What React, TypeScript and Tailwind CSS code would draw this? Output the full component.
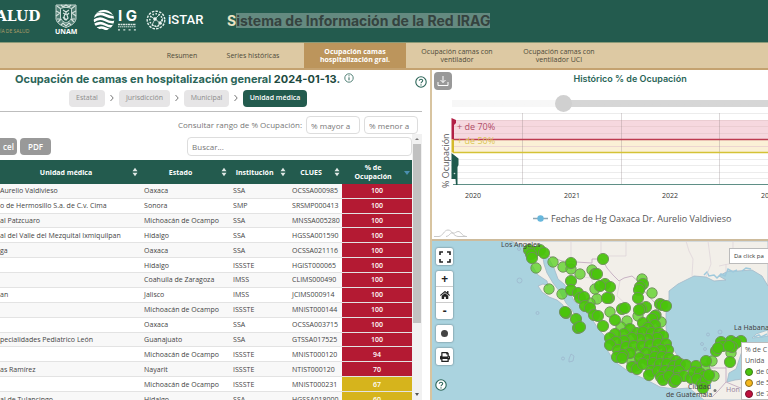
import { FaHome, FaPrint } from "react-icons/fa";

type Row = [string, string, string, string, number];

const rows: Row[] = [
  ["Aurelio Valdivieso", "Oaxaca", "SSA", "OCSSA000985", 100],
  ["o de Hermosillo S.a. de C.v. Cima", "Sonora", "SMP", "SRSMP000413", 100],
  ["al Patzcuaro", "Michoacán de Ocampo", "SSA", "MNSSA005280", 100],
  ["al del Valle del Mezquital Ixmiquilpan", "Hidalgo", "SSA", "HGSSA001590", 100],
  ["ga", "Oaxaca", "SSA", "OCSSA021116", 100],
  ["", "Hidalgo", "ISSSTE", "HGIST000065", 100],
  ["", "Coahuila de Zaragoza", "IMSS", "CLIMS000490", 100],
  ["an", "Jalisco", "IMSS", "JCIMS000914", 100],
  ["", "Michoacán de Ocampo", "ISSSTE", "MNIST000144", 100],
  ["", "Oaxaca", "SSA", "OCSSA003715", 100],
  ["pecialidades Pediatrico León", "Guanajuato", "SSA", "GTSSA017525", 100],
  ["", "Michoacán de Ocampo", "ISSSTE", "MNIST000120", 94],
  ["as Ramírez", "Nayarit", "ISSSTE", "NTIST000120", 70],
  ["", "Michoacán de Ocampo", "ISSSTE", "MNIST000231", 67],
  ["al de Tulancingo", "Hidalgo", "SSA", "HGSSA018000", 60],
];

const lightDots = [
  [553, 262], [563, 267], [571, 269], [580, 274], [592, 270], [595, 289],
  [549, 289], [562, 294], [597, 299], [536, 268], [642, 279], [652, 293],
  [610, 312], [627, 321], [638, 316], [656, 315], [661, 322], [621, 327],
  [731, 353], [712, 361], [714, 376], [705, 369], [638, 352], [632, 362],
  [590, 303], [636, 366], [672, 378],
];

const dots = [
  [529, 250], [534, 252], [540, 250], [544, 253], [531, 254], [532, 258],
  [571, 263], [595, 274], [571, 281], [571, 290], [578, 293], [580, 298],
  [584, 297], [585, 306], [590, 308], [594, 315], [566, 313], [565, 312],
  [576, 319], [578, 328], [580, 327], [603, 259], [597, 274], [605, 284],
  [610, 287], [600, 286], [609, 298], [607, 298], [598, 316], [622, 309],
  [625, 308], [643, 284], [640, 287], [639, 290], [638, 298], [646, 307],
  [641, 309], [639, 310], [660, 304], [662, 305], [666, 306], [615, 320],
  [603, 326], [655, 316], [652, 319], [643, 323], [655, 325], [648, 328],
  [630, 329], [637, 333], [624, 334], [615, 334], [610, 338], [643, 332],
  [652, 333], [659, 333], [663, 336], [657, 338], [648, 339], [640, 339],
  [632, 338], [624, 341], [616, 342], [610, 345], [618, 350], [626, 347],
  [634, 346], [642, 346], [650, 345], [658, 344], [666, 344], [668, 350],
  [661, 350], [654, 352], [646, 353], [630, 353], [623, 355], [617, 357],
  [622, 358], [640, 358], [648, 360], [655, 357], [662, 357], [669, 358],
  [676, 361], [632, 367], [637, 369], [643, 364], [653, 363], [660, 364],
  [667, 364], [674, 366], [680, 364], [686, 365], [651, 371], [649, 375],
  [658, 371], [665, 371], [672, 371], [679, 371], [661, 377], [663, 380],
  [669, 376], [677, 378], [684, 376], [674, 382], [676, 380], [691, 378],
  [696, 366], [694, 372], [700, 373], [706, 361], [704, 376], [697, 379],
  [702, 384], [706, 380], [703, 388], [709, 375], [716, 351], [721, 342],
  [723, 346], [731, 341], [741, 341], [736, 343], [718, 348], [730, 362],
  [732, 347], [729, 346],
];

const tabs = [
  "Ocupación camas hospitalización gral.",
  "Ocupación camas con ventilador",
  "Ocupación camas con ventilador UCI",
];

function Sort({ active = false }: { active?: boolean }) {
  return (
    <svg viewBox="0 0 6 10" className="h-[10px] w-[6px] shrink-0">
      {active ? (
        <path d="M0 4h6L3 8z" fill="#4b8fb0" />
      ) : (
        <path d="M0.5 4.3h5L3 0.8zM0.5 5.7h5L3 9.2z" fill="#dfe9e6" />
      )}
    </svg>
  );
}

function Help() {
  return (
    <svg viewBox="0 0 12 12" className="size-3">
      <circle cx="6" cy="6" r="5.2" fill="#fff" stroke="#2b6558" strokeWidth="1.1" />
      <path d="M4.3 4.8C4.3 2.6 7.8 2.8 7.7 4.7C7.6 5.8 6 5.9 6 7.3" fill="none" stroke="#2b6558" strokeWidth="1.1" />
      <circle cx="6" cy="8.9" r="0.7" fill="#2b6558" />
    </svg>
  );
}

function Logos() {
  return (
    <div className="flex h-full w-[227px] shrink-0 items-start pt-1">
      <div className="w-[55px] pt-1">
        <p className="-ml-1 font-['DejaVu_Serif',serif] text-[14px] leading-4 font-bold">ALUD</p>
        <p className="pt-1 text-[5px] leading-[6px] text-[#b59f68]">ÍA DE SALUD</p>
      </div>
      <div className="flex w-[38px] flex-col">
        <svg viewBox="0 0 22 24" className="h-6 w-[22px]" fill="none" stroke="#d5e3de">
          <path d="M1 1H21V15C20 20 15 22 11 23.500C7 22 2 20 1 15Z" fill="#d5e3de" fillOpacity="0.25" strokeWidth="0.9" />
          <path d="M2 2l4 3M20 2l-4 3M1 7l4 2-4 3M21 7l-4 2 4 3M2 15l4 0-3 3M20 15l-4 0 3 3M6 21l2-2 3 3 3-3 2 2M6 1l2 2 3-2 3 2 2-2" strokeWidth="1.100" />
          <path d="M5.500 4.500C9 3 13 3 16.500 4.500V14C15.500 17 13 18 11 19C9 18 6.500 17 5.500 14Z" fill="#235b4e" strokeWidth="0.9" />
          <path d="M8 6l3 2 3-2M8 9l2 1-1 3 2 3 2-2-1-3 2-2M11 7v4M8 13l2 3" strokeWidth="1.2" />
        </svg>
        <p className="text-[7px] leading-[7px] font-bold">UNAM</p>
      </div>
      <svg viewBox="0 0 22 22" className="mt-[5px] h-[22px] w-[22px]" fill="none" stroke="#fff" strokeWidth="2.6">
        <clipPath id="globe"><circle cx="11" cy="11" r="10.300" /></clipPath>
        <g clipPath="url(#globe)">
          <path d="M0 3.500Q12 -1 22 6M0 8Q6 3 12 6T23 8.500M0 12.500Q6 7.500 12 11T23 12.500M0 17Q6 12 12 15.500T23 16M2 21Q7 17 12 19.500T20 20.500" />
        </g>
      </svg>
      <div className="ml-[3px] w-7 pt-1">
        <p className="font-['Inter',sans-serif] text-[15px] leading-[15px] font-bold">I G</p>
        <svg viewBox="0 0 18 8" className="h-2 w-[18px]" stroke="#d5e3de" fill="none">
          <path d="M0 1.500h18" strokeDasharray="2 0.5" strokeWidth="1.300" />
          <path d="M0 3.800h18" strokeDasharray="1.500 0.5" />
          <path d="M0 6.800h18" strokeDasharray="2 3.300" strokeWidth="1.300" />
        </svg>
      </div>
      <svg viewBox="0 0 20 20" className="mt-[6px] size-5" fill="none" stroke="#e3efeb">
        <circle cx="10" cy="10" r="8.800" strokeWidth="1.400" strokeDasharray="2.500 1.200" />
        <circle cx="10" cy="10" r="6.200" strokeWidth="1.600" strokeDasharray="1.500 1.600" />
        <path d="M4 6l5 3 5-5M9 9l-3 6M9 9l5 4 3-5M14 13l-3 4M6 15l5 2" strokeWidth="0.8" />
        <circle cx="9" cy="9" r="1.300" fill="#fff" />
        <circle cx="14" cy="13" r="1.200" fill="#fff" />
      </svg>
      <p className="ml-[2px] pt-2 font-['Roboto',sans-serif] text-[13px] leading-4 font-medium">iSTAR</p>
    </div>
  );
}

function Capacity() {
  return (
    <section className="min-w-0 overflow-hidden bg-white">
      <div className="flex h-[19px] items-center gap-1 pl-[15px]">
        <h2 className="font-['Inter',sans-serif] text-[11px] font-bold whitespace-nowrap text-[#2b6558]">
          Ocupación de camas en hospitalización general <span className="text-[#1d4a40]">2024-01-13.</span>
        </h2>
        <svg viewBox="0 0 10 10" className="mb-1 size-[10px]" fill="none" stroke="#2b6558">
          <circle cx="5" cy="5" r="4.200" strokeWidth="0.8" />
          <path d="M5 4.300v3M5 2.300v1" />
        </svg>
        <button className="mt-1 mr-[3px] ml-auto" aria-label="Ayuda"><Help /></button>
      </div>
      <div className="mr-2 flex h-[23px] items-center gap-1 border-b border-[#bdbdbd] pb-1 pl-[69px] text-[7px] text-[#8c8c8c]">
        <button className="h-[17px] w-9 rounded-sm bg-[#e6e5e6]">Estatal</button>
        <Chevron />
        <button className="h-[17px] w-[51px] rounded-sm bg-[#e6e5e6]">Jurisdicción</button>
        <Chevron />
        <button className="h-[17px] w-[45px] rounded-sm bg-[#e6e5e6]">Municipal</button>
        <Chevron />
        <button className="h-[17px] w-16 rounded-sm bg-[#235b4e] font-semibold text-white">Unidad médica</button>
      </div>
      <div className="mr-3 flex h-[22px] items-center justify-end gap-1 pt-1 text-[8px] text-[#777]">
        <label htmlFor="mayor">Consultar rango de % Ocupación:</label>
        <input id="mayor" placeholder="% mayor a" className="h-[18px] w-[54px] rounded-sm border border-[#ddd] px-1 placeholder:text-[#777]" />
        <input aria-label="% menor a" placeholder="% menor a" className="h-[18px] w-[54px] rounded-sm border border-[#ddd] px-1 placeholder:text-[#777]" />
      </div>
      <div className="flex">
        <div className="min-w-0 flex-1">
          <div className="flex h-[26px] items-center pb-px text-[8px]">
            <button className="mr-[3px] h-[17px] w-[17px] rounded-r-sm bg-[#999] font-semibold text-white">cel</button>
            <button className="h-[17px] w-[31px] rounded-sm bg-[#999] font-semibold text-white">PDF</button>
            <input aria-label="Buscar" placeholder="Buscar..." className="ml-auto h-[19px] w-[225px] rounded-sm border border-[#ddd] px-1 placeholder:text-[#777]" />
          </div>
          <table className="h-[247px] w-full table-fixed border-collapse text-[7px] leading-[9px] text-[#444]">
            <colgroup>
              <col />
              <col className="w-[89px]" />
              <col className="w-[59px]" />
              <col className="w-[54px]" />
              <col className="w-[70px]" />
            </colgroup>
            <thead className="bg-[#235b4e] text-white">
              <tr className="h-6">
                {["Unidad médica", "Estado", "Institución", "CLUES", "% de Ocupación"].map((h, i) => (
                  <th key={h} className="p-0 font-bold">
                    <div className="flex items-center pr-[2px]">
                      <span className={i === 4 ? "flex-1 px-2" : "flex-1"}>{h}</span>
                      <Sort active={i === 4} />
                    </div>
                  </th>
                ))}
              </tr>
            </thead>
            <tbody>
              {rows.map(([unit, state, inst, clues, pct]) => (
                <tr key={clues} className="border-b border-[#e3e3e3] odd:bg-[#f8f8f8]">
                  <td className="p-0 whitespace-nowrap">{unit}</td>
                  <td className="p-0 pl-1 whitespace-nowrap">{state}</td>
                  <td className="p-0 pl-1">{inst}</td>
                  <td className="p-0 pl-1 whitespace-nowrap">{clues}</td>
                  <td className={`p-0 text-center font-semibold text-white ${pct >= 70 ? "bg-[#b41a33]" : "bg-[#d6b41c]"}`}>{pct}</td>
                </tr>
              ))}
            </tbody>
          </table>
        </div>
        <div className="mr-2 flex w-[10px] flex-col items-center bg-[#f1f1f1]">
          <svg viewBox="0 0 10 10" className="size-[10px] shrink-0"><path d="M3 6h4L5 4z" fill="#777" /></svg>
          <div className="h-[179px] w-2 bg-[#c1c1c1]" />
          <svg viewBox="0 0 10 10" className="mt-[66px] size-[10px] shrink-0"><path d="M3 4h4L5 7z" fill="#555" /></svg>
        </div>
      </div>
    </section>
  );
}

function Chevron() {
  return (
    <svg viewBox="0 0 4 8" className="mx-px h-2 w-1" fill="none" stroke="#777">
      <path d="M0.500 1L3.200 4L0.500 7" />
    </svg>
  );
}

function History() {
  return (
    <section className="h-[171px] overflow-hidden border-b-2 border-[#cdbb9c] bg-white">
      <div className="flex w-[400px] items-start pt-[2px] pl-[2px]">
        <button className="flex size-[18px] items-center justify-center rounded-sm bg-[#999]" aria-label="Descargar">
          <svg viewBox="0 0 14 14" className="size-[14px]" fill="none" stroke="#fff">
            <path d="M7 2v6.500M4.500 6L7 8.500L9.500 6M2 8v3.500h10V8" />
          </svg>
        </button>
        <h2 className="flex-1 pr-6 text-center font-['Inter',sans-serif] text-[9px] leading-[14px] font-semibold text-[#2b6558]">
          Histórico % de Ocupación
        </h2>
      </div>
      <input
        type="range"
        defaultValue={27}
        aria-label="Periodo"
        className="mt-[5px] ml-5 block h-[17px] w-[400px] appearance-none bg-transparent [&::-webkit-slider-runnable-track]:h-[7px] [&::-webkit-slider-runnable-track]:bg-linear-to-r [&::-webkit-slider-runnable-track]:from-[#f7f7f7] [&::-webkit-slider-runnable-track]:from-28% [&::-webkit-slider-runnable-track]:to-[#d6d6d6] [&::-webkit-slider-runnable-track]:to-28% [&::-webkit-slider-thumb]:-mt-[5px] [&::-webkit-slider-thumb]:size-[17px] [&::-webkit-slider-thumb]:appearance-none [&::-webkit-slider-thumb]:rounded-full [&::-webkit-slider-thumb]:bg-[#d0d0d0]"
      />
      <svg viewBox="432 112 400 127" className="block h-[127px] w-[400px]" fontFamily="'Open Sans', sans-serif" fill="#555">
        <path d="M451 113.500H832M451 159.500H832M451 165.500H832M451 172.500H832M451 178.500H832" stroke="#ececec" />
        <rect x="453" y="120" width="379" height="19" fill="#f6d8df" />
        <rect x="453" y="140" width="379" height="12" fill="#fbf0d6" />
        <path d="M453 120.500H832M453 126.500H832M453 133.500H832M453 146.500H832" stroke="#e6c9cd" strokeWidth="0.7" />
        <path d="M522.500 113V185M621.500 113V185M719.500 113V185" stroke="#8a7f80" strokeOpacity="0.3" />
        <path d="M453 139.500H832" stroke="#bd3b50" strokeWidth="1.300" />
        <path d="M453 152.500H832" stroke="#d4c235" strokeWidth="1.300" />
        <path d="M453 184.500H832" stroke="#5f8f86" />
        <path d="M451.500 118L456 120V123L454 125V139.500H451.500z" fill="#b21f45" />
        <path d="M451.500 139.500H454V152.500H451.500z" fill="#d4b92b" />
        <path d="M451.500 153L458.500 158.500V165L457.500 167V185H456L455.500 179H451.500z" fill="#1f5a4d" />
        <circle cx="454.500" cy="173.500" r="0.8" fill="#cfe0dc" />
        <text x="457" y="130" fontSize="9" fill="#b04c66">+ de 70%</text>
        <text x="457" y="144" fontSize="9" fill="#dcc657">+ de 50%</text>
        <text transform="translate(449 188) rotate(-90)" fontSize="9">% Ocupación</text>
        <g fontSize="7" textAnchor="middle" fill="#333">
          <text x="473" y="198">2020</text>
          <text x="572" y="198">2021</text>
          <text x="670" y="198">2022</text>
          <text x="769" y="198">2023</text>
        </g>
        <path d="M533 218.500H548" stroke="#8fa6b3" strokeWidth="1.500" />
        <circle cx="540.500" cy="218.500" r="3.200" fill="#67b7dc" />
        <text x="551" y="222" fontSize="9">Fechas de Hg Oaxaca Dr. Aurelio Valdivieso</text>
        <path d="M434 236.500H439C443 236 444 230 448 230C452 230 453 236 458 236.500H467M446 236.500C450 236 450 232 453 233C455 234 456 231 459 231.500C462 233 462 236 466 236.500" fill="none" stroke="#c9c9c9" />
      </svg>
    </section>
  );
}

const mapButton = "flex h-[17px] w-[17px] items-center justify-center rounded-xs bg-white text-[#222] shadow-[0_0_2px_#0008]";

function HospitalMap() {
  return (
    <section className="relative min-h-0 flex-1 overflow-hidden bg-[#aad3df]">
      <svg viewBox="432 241 336 159" preserveAspectRatio="xMinYMin slice" className="block h-full w-full" fontFamily="'Noto Sans', sans-serif">
        <path
          d="M511 241L517 244L523 245L528 257L533 267L538 275L547 281L548 286L543 284L538 286L542 292L549 297L557 300L563 305L566 315L573 323L577 330L582 332L584 327L577 319L572 310L566 303L560 292L553 283L547 273L544 264L543 258L548 257L554 268L558 279L564 284L570 292L574 301L583 309L592 319L599 330L606 337L606 348L614 361L629 372L645 379L660 387L675 389L689 388L704 400H768V377L750 378L735 380L727 382L729 373L736 369L741 354L746 341L739 337L724 339L716 346L711 357L698 361L688 362L677 355L669 342L666 328L666 313L669 299L669 291L678 284L694 276L706 277L714 281L726 280L719 276L728 271L738 271L752 270L762 276L768 286V241Z"
          fill="#f2efe9"
          stroke="#a3b9c9"
          strokeWidth="0.8"
        />
        <path d="M752 338L756 334L768 330V336L762 337Z" fill="#f2efe9" stroke="#9ab9cc" strokeWidth="0.7" />
        <path d="M704 275l3-3 2 4 5-1 3 3 4-4 4 2 3-7 5 3 4-2M742 271l4-3 5 1M754 337l5-2 2 2 6-3" fill="none" stroke="#9ec9dc" strokeWidth="1.500" />
        <g fill="none" stroke="#c3abc0" strokeWidth="0.9">
          <path d="M543 254L562 261L576 262L592 263V259H602L607 268L613 275L619 281L624 278L632 276L640 283L645 292L655 303L669 306" />
          <path d="M711 368H726V382L719 390L712 397M726 368V360M726 382L738 387L752 392" />
        </g>
        <path d="M571 241V262M626 241V256H598M601 241V256M686 241L689 251L693 259L692 276M708 241L711 264L706 277M733 241V263L719 266M726 264V272M568 265L575 276L591 278L599 302M620 281L617 296L628 306L622 318M641 284L635 300L645 315" fill="none" stroke="#ddd2d8" strokeWidth="0.7" />
        <g fill="none" stroke="#9db6cd" strokeWidth="0.8">
          <circle cx="519" cy="249" r="1.500" />
          <circle cx="519.500" cy="280.500" r="2.500" />
          <circle cx="537.500" cy="313" r="1.500" />
          <circle cx="563" cy="358.500" r="1.500" />
          <path d="M569 359l2-5 3 2-1 5-4 1z" />
          <circle cx="708" cy="334.500" r="1.500" />
          <circle cx="720" cy="332" r="2" />
          <circle cx="702" cy="344" r="1.500" />
          <circle cx="705" cy="349" r="1.500" />
        </g>
        <g stroke="#6f8f5c" strokeWidth="0.9">
          {lightDots.map(([x, y]) => (
            <circle key={`${x}-${y}`} cx={x} cy={y} r="5.200" fill="#55d01c" fillOpacity="0.75" />
          ))}
          {dots.map(([x, y]) => (
            <circle key={`${x}-${y}`} cx={x} cy={y} r="5.600" fill="#4ac40c" fillOpacity="0.95" />
          ))}
        </g>
        <g fontSize="7" fill="#444">
          <text x="501" y="247">Los Angeles</text>
          <text x="734" y="330">La Habana</text>
          <text x="688" y="389">Ciudad</text>
          <text x="666" y="397">de Guatemala</text>
          <text x="726" y="392" fill="#9a86a0">Hon</text>
        </g>
        <circle cx="715" cy="390.500" r="1.500" fill="#777" />
      </svg>
      <div className="absolute top-[7px] left-1 flex flex-col items-start gap-[6px]">
        <button className={mapButton} aria-label="Pantalla completa">
          <svg viewBox="0 0 12 12" className="size-3" fill="none" stroke="#222" strokeWidth="1.600">
            <path d="M1 4V1H4M8 1H11V4M11 8V11H8M4 11H1V8" />
          </svg>
        </button>
        <div className="flex flex-col divide-y divide-[#ccc] rounded-xs bg-white text-[#222] shadow-[0_0_2px_#0008]">
          <button className="flex h-4 w-[17px] items-center justify-center text-[12px] font-bold">+</button>
          <button className="flex h-4 w-[17px] items-center justify-center" aria-label="Inicio"><FaHome size={10} /></button>
          <button className="flex h-4 w-[17px] items-center justify-center text-[12px] font-bold">-</button>
        </div>
        <button className={mapButton} aria-label="Capas"><span className="size-[7px] rounded-full bg-[#444]" /></button>
        <button className={mapButton} aria-label="Imprimir"><FaPrint size={10} /></button>
      </div>
      <button className="absolute bottom-[9px] left-[3px]" aria-label="Ayuda"><Help /></button>
      <p className="absolute top-[7px] right-0 w-[39px] overflow-hidden border border-r-0 border-[#bbb] bg-white pl-1 text-[6px] leading-[14px] whitespace-nowrap text-[#333]">
        Da click pa
      </p>
      <div className="absolute right-0 bottom-0 w-[27px] overflow-hidden border border-r-0 border-[#bbb] bg-white pt-px pl-[3px] text-[7px] leading-[11px] whitespace-nowrap text-[#555]">
        <p>% de C</p>
        <p>Unida</p>
        <p className="flex items-center gap-[3px]"><span className="size-2 shrink-0 rounded-full border border-[#3d7a1c] bg-[#4ac40c]" />de 0</p>
        <p className="flex items-center gap-[3px]"><span className="size-2 shrink-0 rounded-full border border-[#8a6d1c] bg-[#f5b81c]" />de 5</p>
        <p className="flex items-center gap-[3px]"><span className="size-2 shrink-0 rounded-full border border-[#7a1030] bg-[#c0103c]" />de 7</p>
      </div>
    </section>
  );
}

export default function App() {
  return (
    <div className="flex h-screen flex-col overflow-hidden bg-white font-['Open_Sans','Noto_Sans',sans-serif]">
      <header className="flex h-[42px] shrink-0 bg-[#235b4e] text-white">
        <Logos />
        <h1 className="pt-[13px] font-['Inter',sans-serif] text-[14px] leading-[15px] font-bold whitespace-nowrap text-[#e9e3c3]">
          S<span className="inline-block bg-[#648a80] text-[#35433f]">istema de Información de la Red IRAG</span>
        </h1>
      </header>
      <nav className="flex h-7 shrink-0 items-stretch border-t border-b-2 border-t-[#8a9a78] border-b-[#c4a270] bg-[#ddc9a3] pl-[162px] text-center text-[7px] leading-[8px] text-[#4d4a3a]">
        <a href="#resumen" className="flex w-10 items-center justify-center">Resumen</a>
        <a href="#series" className="flex w-[102px] items-center justify-center">Series históricas</a>
        {tabs.map((tab, i) => (
          <a
            key={tab}
            href="#ocupacion"
            className={`flex w-[102px] items-center justify-center px-[11px] ${i === 0 ? "bg-[#bc955c] font-bold text-white" : ""}`}
          >
            {tab}
          </a>
        ))}
      </nav>
      <main className="grid min-h-0 flex-1 grid-cols-[56%_1fr]">
        <Capacity />
        <div className="flex min-h-0 min-w-0 flex-col overflow-hidden border-l-2 border-[#d8c4a0]">
          <History />
          <HospitalMap />
        </div>
      </main>
    </div>
  );
}
